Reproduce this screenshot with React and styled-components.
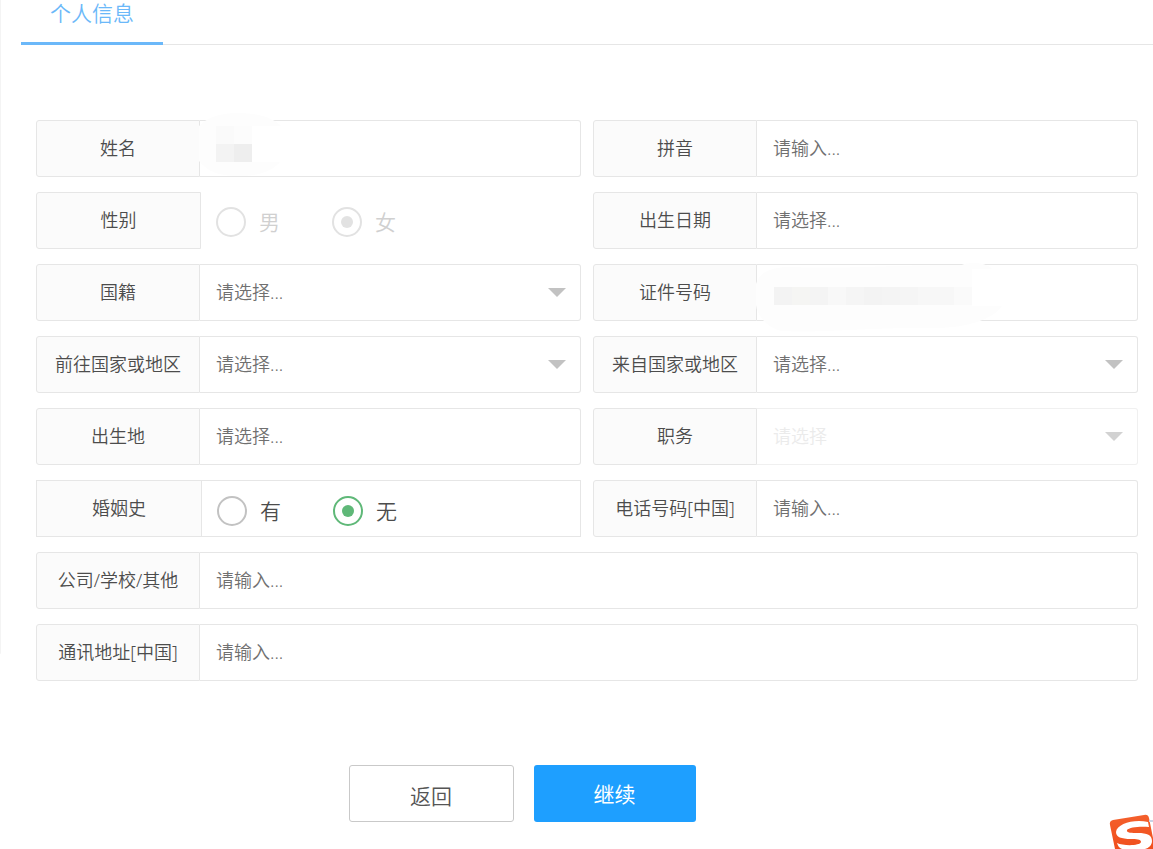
import React, { useState } from 'react';
import styled, { createGlobalStyle, css } from 'styled-components';

const GlobalStyle = createGlobalStyle`
  * {
    box-sizing: border-box;
  }

  body {
    margin: 0;
    background: #fff;
    color: #4c4c4c;
    font-family: "Noto Sans", "Noto Sans CJK SC", sans-serif;
    font-size: 18px;
    font-weight: 350;
  }

  input, select, button {
    font: inherit;
  }
`;

const Page = styled.div`
  position: relative;
  min-height: 100vh;
  padding-left: 21px;
  background: linear-gradient(#f4f4f4, #f4f4f4) 0 0 / 1px 77% no-repeat;
`;

const TabBar = styled.nav`
  display: flex;
  height: 45px;
  border-bottom: 1px solid #e6e6e6;
`;

const Tab = styled.a`
  height: 45px;
  padding: 0 29px;
  border-bottom: 3px solid #6bb8f9;
  color: #6bb8f9;
  font-size: 21px;
  line-height: 26px;
  text-decoration: none;
`;

const Form = styled.form`
  padding: 75px 15px 24px;
`;

const Fields = styled.div`
  display: grid;
  grid-template-columns: 1fr 1fr;
  gap: 15px 12px;
`;

const frame = css`
  border: 1px solid #e6e6e6;
  border-radius: 3px;
`;

const Field = styled.div`
  position: relative;
  display: flex;
  height: 57px;
  min-width: 0;
  margin: 0;
  grid-column: ${props => (props.$wide ? '1 / -1' : 'auto')};
`;

const FieldLabel = styled.label`
  ${frame}
  flex: none;
  display: flex;
  align-items: center;
  justify-content: center;
  width: 164px;
  padding-bottom: 3px;
  border-radius: 3px 0 0 3px;
  background: #fbfbfb;
  white-space: nowrap;
`;

const control = css`
  ${frame}
  flex: 1;
  width: 100%;
  height: 57px;
  min-width: 0;
  padding: 0 16px 1px;
  border-left: 0;
  border-radius: 0 3px 3px 0;
  background: #fff;
  color: #707070;
  outline: none;
`;

const TextInput = styled.input`
  ${control}

  &::placeholder {
    color: #707070;
    opacity: 1;
  }
`;

const SelectBox = styled.div`
  position: relative;
  flex: 1;
  min-width: 0;

  &::after {
    content: '';
    position: absolute;
    top: 24px;
    right: 15px;
    border: 9px solid transparent;
    border-top-color: ${props => (props.$disabled ? '#d2d2d2' : '#c2c2c2')};
    border-bottom: 0;
    pointer-events: none;
  }
`;

const Select = styled.select`
  ${control}
  appearance: none;

  &:disabled {
    border-color: #f0f0f0;
    color: #ebebeb;
    opacity: 1;
  }
`;

const RadioGroup = styled.div`
  display: flex;
  flex: 1;
  ${props => props.$framed && css`
    ${frame}
    border-radius: 0;
  `}
`;

const RadioTitle = styled.div`
  flex: none;
  display: flex;
  align-items: center;
  justify-content: center;
  width: 165px;
  padding-bottom: 3px;
  border: ${props => (props.$framed ? '0' : '1px')} solid #e6e6e6;
  border-right-width: 1px;
  border-radius: ${props => (props.$framed ? '0' : '3px 0 0 3px')};
  background: #fbfbfb;
`;

const Choices = styled.div`
  display: flex;
  align-items: center;
  gap: 52px;
  padding: ${props => (props.$framed ? 4 : 2)}px 15px 0;
`;

const Choice = styled.label`
  display: flex;
  align-items: center;
  gap: 13px;
  color: ${props => (props.$disabled ? '#d0d0d0' : '#4c4c4c')};
  font-size: 21px;
  line-height: 28px;
`;

const Radio = styled.input`
  appearance: none;
  display: flex;
  align-items: center;
  justify-content: center;
  width: 30px;
  height: 30px;
  margin: 0;
  border: 2px solid #c2c2c2;
  border-radius: 50%;
  color: #5fb878;

  &:checked {
    border-color: currentColor;
  }

  &:disabled {
    border-color: #e2e2e2;
    color: #e2e2e2;
  }

  &:checked::before {
    content: '';
    width: 12px;
    height: 12px;
    border-radius: 50%;
    background: currentColor;
  }
`;

// covers a private value with a pale smear and pixel blocks
const Mask = styled.svg`
  position: absolute;
  top: -7px;
  left: 163px;
  pointer-events: none;
`;

const Actions = styled.div`
  display: flex;
  justify-content: center;
  gap: 20px;
  padding: 84px 130px 0 0;
`;

const Button = styled.button`
  width: ${props => (props.$primary ? 162 : 165)}px;
  height: 57px;
  padding: ${props => (props.$primary ? '0 0 2px' : '2px 0 0')};
  border: ${props => (props.$primary ? '0' : '1px solid #c9c9c9')};
  border-radius: 3px;
  background: ${props => (props.$primary ? '#1e9fff' : '#fff')};
  color: ${props => (props.$primary ? '#fff' : '#555')};
  font-size: 21px;
  font-weight: ${props => (props.$primary ? 400 : 350)};
  cursor: pointer;
`;

const ImeBadge = styled.svg`
  position: fixed;
  right: 0;
  bottom: 0;
`;

const NAME_BLOCKS = [
  [16, 13, '#fafafa'], [34, 13, '#fcfcfc'],
  [16, 31, '#f3f3f3'], [34, 31, '#eeeeee'],
];

const ID_BLOCKS = [
  '#f3f3f3', '#f5f5f3', '#f4f4f4', '#f8f8f8', '#f5f5f5', '#f3f3f3',
  '#f4f4f4', '#f5f5f5', '#f7f7f7', '#f7f7f7', '#fafafa',
];

function TextField({ id, label, placeholder = '请输入...', wide, children }) {
  return (
    <Field $wide={wide}>
      <FieldLabel htmlFor={id}>{label}</FieldLabel>
      <TextInput id={id} type="text" placeholder={placeholder} />
      {children}
    </Field>
  );
}

function SelectField({ id, label, placeholder = '请选择...', disabled }) {
  return (
    <Field>
      <FieldLabel htmlFor={id}>{label}</FieldLabel>
      <SelectBox $disabled={disabled}>
        <Select id={id} disabled={disabled}>
          <option value="">{placeholder}</option>
        </Select>
      </SelectBox>
    </Field>
  );
}

function RadioField({ name, label, options, initial, disabled, framed }) {
  const [value, setValue] = useState(initial);

  return (
    <Field role="radiogroup" aria-labelledby={`${name}-title`}>
      <RadioGroup $framed={framed}>
        <RadioTitle id={`${name}-title`} $framed={framed}>{label}</RadioTitle>
        <Choices $framed={framed}>
          {options.map(option => (
            <Choice key={option} $disabled={disabled}>
              <Radio
                type="radio"
                name={name}
                value={option}
                checked={value === option}
                disabled={disabled}
                onChange={() => setValue(option)}
              />
              {option}
            </Choice>
          ))}
        </Choices>
      </RadioGroup>
    </Field>
  );
}

function NameMask() {
  return (
    <Mask width="84" height="64" aria-hidden="true">
      <path d="M0 13C8 5 20 0 38 0C60 0 74 5 82 13V48C74 58 60 63 38 63C20 63 8 58 0 48Z" fill="#fdfdfd" />
      <rect x="53" y="13" width="30" height="36" fill="#fff" />
      {NAME_BLOCKS.map(([x, y, fill]) => (
        <rect key={`${x}-${y}`} x={x + 1} y={y} width="18" height="18" fill={fill} />
      ))}
    </Mask>
  );
}

function IdMask() {
  return (
    <Mask width="250" height="80" aria-hidden="true">
      <path d="M0 27C3 16 14 10 34 10C90 12 140 8 206 8C212 5 230 5 236 12L246 49C238 62 210 71 180 71C120 70 60 76 26 74C10 70 1 58 0 48Z" fill="#fdfdfd" />
      <rect x="216" y="12" width="32" height="37" fill="#fff" />
      {ID_BLOCKS.map((fill, i) => (
        <rect key={i} x={18 + i * 18} y="30" width="18" height="18" fill={fill} />
      ))}
    </Mask>
  );
}

function App() {
  return (
    <>
      <GlobalStyle />
      <Page>
        <TabBar>
          <Tab href="#info">个人信息</Tab>
        </TabBar>

        <Form onSubmit={e => e.preventDefault()}>
          <Fields>
            <TextField id="name" label="姓名" placeholder=""><NameMask /></TextField>
            <TextField id="pinyin" label="拼音" />
            <RadioField name="gender" label="性别" options={['男', '女']} initial="女" disabled />
            <TextField id="birthday" label="出生日期" placeholder="请选择..." />
            <SelectField id="nationality" label="国籍" />
            <TextField id="idNumber" label="证件号码" placeholder=""><IdMask /></TextField>
            <SelectField id="destination" label="前往国家或地区" />
            <SelectField id="origin" label="来自国家或地区" />
            <TextField id="birthplace" label="出生地" placeholder="请选择..." />
            <SelectField id="job" label="职务" placeholder="请选择" disabled />
            <RadioField name="marriage" label="婚姻史" options={['有', '无']} initial="无" framed />
            <TextField id="phone" label="电话号码[中国]" />
            <TextField id="company" label="公司/学校/其他" wide />
            <TextField id="address" label="通讯地址[中国]" wide />
          </Fields>

          <Actions>
            <Button type="button">返回</Button>
            <Button type="submit" $primary>继续</Button>
          </Actions>
        </Form>

        <ImeBadge width="44" height="35" viewBox="0 0 44 35" aria-hidden="true">
          <defs>
            <linearGradient id="badge" x1="0" y1="0" x2="0" y2="1">
              <stop offset="0" stopColor="#f4602c" />
              <stop offset="1" stopColor="#f04e1c" />
            </linearGradient>
          </defs>
          <path d="M4 6L35 1Q39 0 40 4L44 24V35H6L1 11Q0 7 4 6Z" fill="url(#badge)" />
          <path d="M40 6H44V8H40Z" fill="#c9d3e6" />
          <path
            d="M39 8L40 13C32 12 20 13 18 16C17 19 23 19 29 19C38 19 43 21 43 27C43 31 40 34 36 35H13C10 34 9 32 8 29C14 32 31 32 32 28C32 25 27 25 22 25C12 25 7 23 7 18C8 10 24 5 39 8Z"
            fill="#fff"
          />
        </ImeBadge>
      </Page>
    </>
  );
}

export default App;
